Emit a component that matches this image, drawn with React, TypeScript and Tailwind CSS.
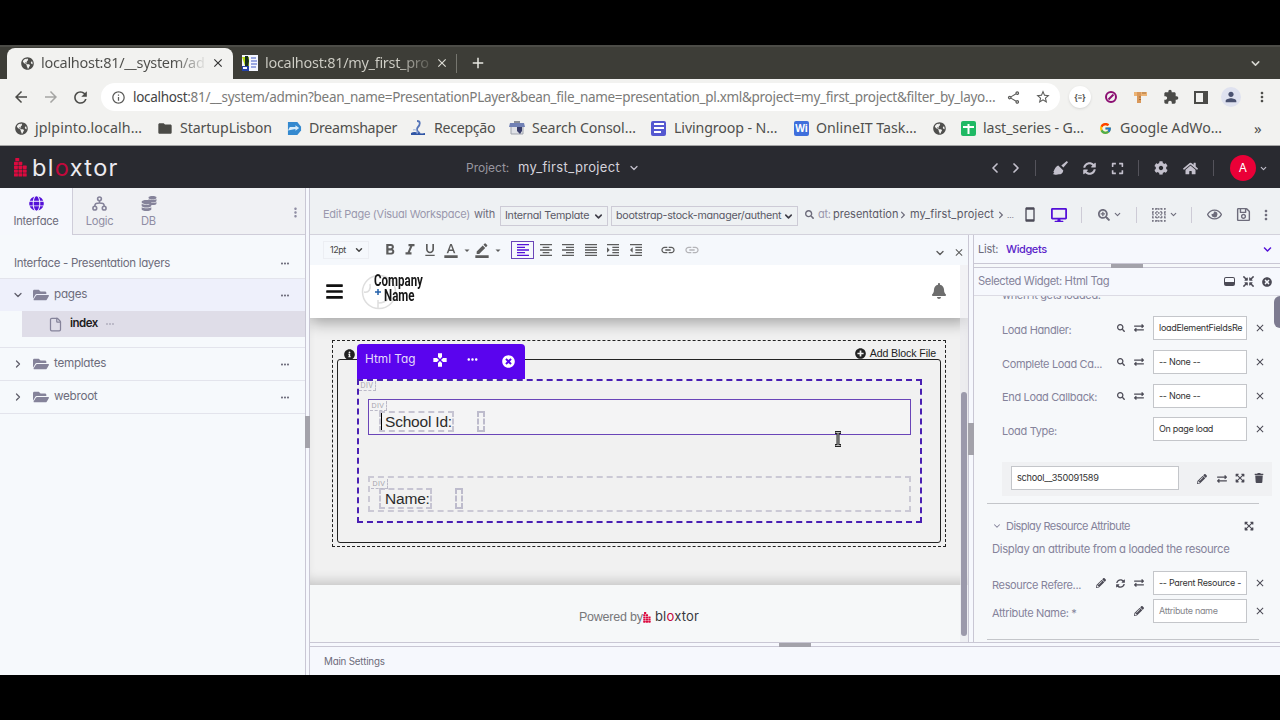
import type { ReactNode } from "react";
import { clsx } from "clsx";
import {
  FaBars,
  FaBell,
  FaChevronDown,
  FaChevronRight,
  FaCog,
  FaCompressArrowsAlt,
  FaDatabase,
  FaDesktop,
  FaExchangeAlt,
  FaExpand,
  FaExpandArrowsAlt,
  FaFolderOpen,
  FaGlobe,
  FaGlobeAmericas,
  FaHome,
  FaInfoCircle,
  FaPencilAlt,
  FaPlusCircle,
  FaRegEye,
  FaRegSave,
  FaSearch,
  FaSearchPlus,
  FaSyncAlt,
  FaTimesCircle,
  FaTrash,
} from "react-icons/fa";
import { FcGoogle } from "react-icons/fc";
import {
  MdAdd,
  MdArrowBack,
  MdArrowDropDown,
  MdArrowForward,
  MdBorderColor,
  MdClose,
  MdExtension,
  MdFolder,
  MdFormatAlignCenter,
  MdFormatAlignJustify,
  MdFormatAlignLeft,
  MdFormatAlignRight,
  MdFormatBold,
  MdFormatColorText,
  MdFormatIndentDecrease,
  MdFormatIndentIncrease,
  MdFormatItalic,
  MdFormatUnderlined,
  MdGamepad,
  MdInfoOutline,
  MdLink,
  MdMoreHoriz,
  MdMoreVert,
  MdOutlineShare,
  MdPerson,
  MdRefresh,
  MdStarBorder,
  MdStayCurrentPortrait,
} from "react-icons/md";
import { ChevronDown, ChevronLeft, ChevronRight, File } from "lucide-react";

type CellProps = {
  className?: string;
  children?: ReactNode;
};

// fixed-width slot that centers an icon
function Slot({ className, children }: CellProps) {
  return (
    <span className={clsx("flex shrink-0 items-center justify-center", className)}>
      {children}
    </span>
  );
}

function Label({ className, children }: CellProps) {
  return (
    <span className={clsx("shrink-0 whitespace-nowrap", className)}>{children}</span>
  );
}

function BrandMark({ className }: { className?: string }) {
  const dots = [
    [0.3, 0],
    [0, 1],
    [1, 1],
    [0, 2],
    [1, 2],
    [2, 2],
    [0, 3],
    [1, 3],
    [2, 3],
    [0, 4],
    [1, 4],
    [2, 4],
  ];
  return (
    <svg viewBox="0 0 13 19" className={className} fill="#dc0a3f">
      {dots.map(([x, y], i) => (
        <rect key={i} x={x * 4.4} y={y * 3.8} width="3.9" height="3.3" rx="0.6" />
      ))}
    </svg>
  );
}

function BrushIcon() {
  return (
    <svg viewBox="0 0 16 16" className="size-4" fill="#c3c0cc">
      <path d="M14.8 1 16 2.2 11.4 7.6 9.3 5.6z" />
      <path d="M6.300 5.600 11.300 10.400C11 13 9 14.300 7 14.300 4.500 15 2 14.500.8 14.200L2.300 12.400 1.300 12C2.600 10.500 2.600 7 6.300 5.600z" />
    </svg>
  );
}

function BrowserTabs() {
  return (
    <div className="flex h-[34px] shrink-0 items-end border-t-2 border-[#4c4c47] bg-[#3d3d37] text-[14.5px] text-[#4d4d4a]">
      <div className="ml-[7px] flex h-[31px] w-[226px] items-center rounded-t-lg bg-[#f2f2f0] pb-px pl-3">
        <Slot className="mr-[6px] w-4 text-[#4d4d4a]">
          <FaGlobeAmericas size={13} />
        </Slot>
        <span className="w-[165px] shrink-0 bg-linear-to-r from-[#4d4d4a] from-80% to-[#e8e8e6] bg-clip-text whitespace-nowrap text-transparent tracking-[-0.300px]">
          localhost:81/__system/ad
        </span>
        <Slot className="ml-[4px] w-4 text-[#333]">
          <MdClose size={14} />
        </Slot>
      </div>
      <div className="flex h-[31px] items-center pb-px pl-[9px] text-[#c9c8c0]">
        <svg viewBox="0 0 16 16" className="mr-[7px] size-4 shrink-0">
          <rect width="16" height="16" fill="#f4f6ff" />
          <path d="M0 2h7v9H3z" fill="#b6dc10" />
          <path d="M3 1h3l1 5-1 7H3z" fill="#17301e" />
          <path d="M9 3h5M9 6h6M9 9h6M9 12h5" stroke="#7c8dd8" strokeWidth="1.300" />
          <path d="M0 11h7v5H0z" fill="#2341a8" />
          <path d="M1 12h4v2H1z" fill="#f4f6ff" />
        </svg>
        <span className="w-[166px] shrink-0 bg-linear-to-r from-[#cfcec6] from-80% to-[#55554e] bg-clip-text whitespace-nowrap text-transparent tracking-[-0.300px]">
          localhost:81/my_first_pro
        </span>
        <Slot className="ml-[3px] w-4 text-[#dddcd5]">
          <MdClose size={14} />
        </Slot>
        <div className="ml-[6px] h-[19px] w-px bg-[#76766f]" />
        <Slot className="ml-[11px] w-5 text-[#e8e8e2]">
          <MdAdd size={18} />
        </Slot>
      </div>
      <Slot className="mr-[17px] ml-auto h-[31px] w-4 text-[#d5d5cf]">
        <ChevronDown size={13} strokeWidth={2.800} />
      </Slot>
    </div>
  );
}

function AddressBar() {
  return (
    <div className="flex h-[35px] shrink-0 items-center bg-[#f2f2f0] pt-px pl-[11px] text-[#4b4b48]">
      <Slot className="w-5">
        <MdArrowBack size={18} />
      </Slot>
      <Slot className="ml-[10px] w-5 text-[#a5a5a3]">
        <MdArrowForward size={18} />
      </Slot>
      <Slot className="ml-[9px] w-5">
        <MdRefresh size={19} />
      </Slot>
      <div className="ml-[11px] flex h-[28px] w-[959px] shrink-0 items-center rounded-full bg-white pl-[9px]">
        <Slot className="w-4 text-[#5b5b59]">
          <MdInfoOutline size={15} />
        </Slot>
        <Label className="ml-[7px] w-[864px] text-[13.500px] tracking-[-0.308px] text-[#7b7b79]">
          <span className="text-[#444]">localhost</span>
          :81/__system/admin?bean_name=PresentationPLayer&amp;bean_file_name=presentation_pl.xml&amp;project=my_first_project&amp;filter_by_layo…
        </Label>
        <Slot className="ml-2 w-4 text-[#5b5b59]">
          <MdOutlineShare size={15} />
        </Slot>
        <Slot className="ml-[14px] w-4 text-[#5b5b59]">
          <MdStarBorder size={16} />
        </Slot>
      </div>
      <Slot className="ml-[9px] size-[22px] rounded-full bg-white text-[8px] font-bold shadow">
        {"{≡}"}
      </Slot>
      <Slot className="ml-[12px] w-4">
        <svg viewBox="0 0 12 12" className="size-3" fill="none" stroke="#8c0f72" strokeWidth="2">
          <circle cx="6" cy="6" r="5" />
          <path d="M3.500 8.500 8.500 3.500" />
        </svg>
      </Slot>
      <Slot className="ml-[14px] w-4">
        <svg viewBox="0 0 14 14" className="size-[14px]">
          <path d="M0 2h13v4H0z" fill="#ecb374" />
          <path d="M3 2h4v11H3z" fill="#d9985a" />
          <path d="M5 7h2M9 2v2M11 2v2M5 9.500h2" stroke="#8a5424" strokeWidth="0.700" />
        </svg>
      </Slot>
      <Slot className="ml-[14px] w-4">
        <MdExtension size={16} />
      </Slot>
      <Slot className="ml-[14px] w-4">
        <span className="h-[13px] w-[14px] border-2 border-r-[5px] border-[#4b4b48]" />
      </Slot>
      <Slot className="ml-[12px] size-[20px] rounded-full bg-[#dfe2ef] text-[#4a5270]">
        <MdPerson size={16} />
      </Slot>
      <Slot className="ml-[13px] w-4">
        <MdMoreVert size={18} />
      </Slot>
    </div>
  );
}

function Bookmarks() {
  return (
    <div className="flex h-[32px] shrink-0 items-center border-b border-[#a5a5a5] bg-[#f2f2f0] pb-[3px] pl-[13px] text-[14.2px] text-[#4f4f4d]">
      <Slot className="w-4">
        <FaGlobeAmericas size={13} />
      </Slot>
      <Label className="ml-[6px] w-[122px] tracking-[0.100px]">jplpinto.localh…</Label>
      <Slot className="w-4 text-[#4a4a46]">
        <MdFolder size={17} />
      </Slot>
      <Label className="ml-[7px] w-[106px] tracking-[-0.100px]">StartupLisbon</Label>
      <Slot className="w-4">
        <svg viewBox="0 0 16 16" className="size-[15px]">
          <path d="M1 1h10l4 5v4l-4 5H1z" fill="#3489cf" />
          <path d="M3 6.500h6V4.500l4 3-4 3v-2L1 10z" fill="#d8ecfa" />
        </svg>
      </Slot>
      <Label className="ml-[7px] w-[101px] tracking-[-0.300px]">Dreamshaper</Label>
      <Slot className="w-4">
        <svg viewBox="0 0 16 16" className="size-4" fill="none">
          <path d="M7 1c4 0 3 4 1 6s-1 5 2 6" stroke="#5675b8" strokeWidth="1.800" />
          <path d="M1 13c5-3 8 2 14 0v2H1z" fill="#2f55a5" />
          <path d="M3 10c3-1 5 1 4 4" stroke="#9ab0dc" />
        </svg>
      </Slot>
      <Label className="ml-[8px] w-[75px] tracking-[-0.300px]">Recepção</Label>
      <Slot className="w-4">
        <svg viewBox="0 0 16 16" className="size-4">
          <path d="M2 5h12v9H2z" fill="#dfe1e6" stroke="#9fa3ad" />
          <path d="M1 3h14l1 4H0z" fill="#7181b5" />
          <path d="M5 1h6v2H5z" fill="#8b8f99" />
          <path d="M8 7h5v4l-2 3-3-3z" fill="#3a3f6b" />
        </svg>
      </Slot>
      <Label className="ml-[7px] w-[119px] tracking-[-0.100px]">Search Consol…</Label>
      <Slot className="h-[15px] w-[15px] flex-col gap-[2px] rounded-xs bg-[#5558d0]">
        <span className="h-[2px] w-[10px] bg-white" />
        <span className="h-[2px] w-[10px] bg-white" />
        <span className="mr-[3px] h-[2px] w-[7px] bg-white" />
      </Slot>
      <Label className="ml-[8px] w-[119px] tracking-[-0.100px]">Livingroop - N…</Label>
      <Slot className="ml-px h-[15px] w-[15px] rounded-xs bg-[#3f6fdc] text-[10px] font-bold text-white">
        Wi
      </Slot>
      <Label className="ml-[7px] w-[115px]">OnlineIT Task…</Label>
      <Slot className="w-4">
        <FaGlobeAmericas size={13} />
      </Slot>
      <Slot className="ml-[14px] size-[15px] rounded-xs bg-[#1fb964]">
        <svg viewBox="0 0 15 15" className="size-[15px]">
          <path d="M2 6h11M7.500 3v10" stroke="#fff" strokeWidth="2" />
        </svg>
      </Slot>
      <Label className="ml-[7px] w-[115px] tracking-[-0.100px]">last_series - G…</Label>
      <Slot className="-ml-px w-4">
        <FcGoogle size={13} />
      </Slot>
      <Label className="ml-[7px] w-[134px]">Google AdWo…</Label>
      <Label className="text-[15px] leading-4">»</Label>
    </div>
  );
}

function AppHeader() {
  return (
    <header className="flex h-[42px] shrink-0 items-center bg-[#292a30] pt-[2px] text-[#c3c0cc]">
      <BrandMark className="mb-px ml-[14px] h-[19px] w-[13px]" />
      <Label className="-mt-px ml-[5px] w-[434px] text-[23.500px] tracking-[1.350px] text-[#eceaf0]">
        bl<span className="text-[#c2083c]">o</span>xtor
      </Label>
      <Label className="w-[52px] text-[12px] text-[#98969f]">Project:</Label>
      <Label className="w-[108px] text-[13px] tracking-[0.350px] text-[#d5d3dc]">my_first_project</Label>
      <Slot className="w-4">
        <ChevronDown size={12} strokeWidth={2.500} />
      </Slot>
      <div className="mr-[11px] ml-auto flex items-center">
        <Slot className="w-4">
          <ChevronLeft size={18} strokeWidth={2.500} />
        </Slot>
        <Slot className="ml-[5px] w-4">
          <ChevronRight size={18} strokeWidth={2.500} />
        </Slot>
        <span className="ml-[11px] h-4 w-px bg-[#54535b]" />
        <Slot className="ml-[16px] w-4">
          <BrushIcon />
        </Slot>
        <Slot className="ml-[13px] w-4">
          <FaSyncAlt size={13} />
        </Slot>
        <Slot className="ml-[12px] w-4">
          <FaExpand size={13} />
        </Slot>
        <span className="ml-[13px] h-4 w-px bg-[#54535b]" />
        <Slot className="ml-[14px] w-4">
          <FaCog size={14} />
        </Slot>
        <Slot className="ml-[13px] w-4">
          <FaHome size={15} />
        </Slot>
        <span className="ml-[15px] h-4 w-px bg-[#54535b]" />
        <Slot className="ml-[16px] size-[26px] rounded-full bg-[#ea0037] text-[12px] text-white">
          A
        </Slot>
        <Slot className="ml-[2px] w-[11px]">
          <ChevronDown size={9} strokeWidth={3} />
        </Slot>
      </div>
    </header>
  );
}

function TreeRow({
  name,
  open,
  className,
}: {
  name: string;
  open?: boolean;
  className?: string;
}) {
  return (
    <div className={clsx("flex shrink-0 items-center border-t border-[#e3e4ec] pl-3", className)}>
      <Slot className="w-3 text-[#5f5e6a]">
        {open ? (
          <ChevronDown size={12} strokeWidth={2.500} />
        ) : (
          <ChevronRight size={12} strokeWidth={2.500} />
        )}
      </Slot>
      <Slot className="ml-[9px] w-4 text-[#85839a]">
        <FaFolderOpen size={16} />
      </Slot>
      <Label className="ml-[5px] pb-px text-[11.700px] tracking-[-0.280px] text-[#6d6c7b]">{name}</Label>
      <Slot className="mr-[14px] ml-auto w-3 text-[#6d6c7b]">
        <MdMoreHoriz size={13} />
      </Slot>
    </div>
  );
}

function Sidebar() {
  return (
    <aside className="flex w-[305px] shrink-0 flex-col bg-[#f6f9fc]">
      <div className="flex h-[47px] shrink-0 bg-[#f0f1f4] text-[11.200px] tracking-[-0.280px] text-[#8f8da3]">
        <div className="flex w-[73px] flex-col items-center border-r border-[#cfcdd9] bg-[#f6f8fd] pt-2 text-[#6d6c7b]">
          <FaGlobe size={15} className="text-[#5410d8]" />
          <span className="mt-[2px]">Interface</span>
        </div>
        <div className="flex flex-1 border-b border-[#cfcdd9] pt-2">
          <div className="flex w-[53px] flex-col items-center">
            <svg viewBox="0 0 16 16" className="size-[15px]" fill="none" stroke="#85839a" strokeWidth="1.700">
              <circle cx="8" cy="3" r="2" />
              <circle cx="3" cy="13" r="2" />
              <circle cx="13" cy="13" r="2" />
              <path d="M8 5v3M3 11c0-3 1-3.500 5-3.500S13 8 13 11" />
            </svg>
            <span className="mt-[2px]">Logic</span>
          </div>
          <div className="flex w-[45px] flex-col items-center">
            <span className="flex h-[15px] items-start text-[#85839a]">
              <FaDatabase size={11} className="mt-1" />
              <FaDatabase size={9} className="-ml-1" />
            </span>
            <span className="mt-[2px]">DB</span>
          </div>
          <Slot className="mt-1 mr-[2px] ml-auto h-6 w-4">
            <MdMoreVert size={15} />
          </Slot>
        </div>
      </div>
      <div className="flex h-[43px] shrink-0 items-center pt-[14px] pl-[14px] text-[11.500px] tracking-[-0.320px] text-[#6d6c7b]">
        <Label>Interface - Presentation layers</Label>
        <Slot className="mr-[14px] ml-auto w-3">
          <MdMoreHoriz size={13} />
        </Slot>
      </div>
      <TreeRow name="pages" open className="h-[33px] bg-[#eef0fb]" />
      <div className="ml-[22px] flex h-[26px] shrink-0 items-center bg-[#dfdde8] pl-[26px]">
        <File size={15} className="text-[#85839a]" />
        <Label className="ml-[7px] text-[11.500px] font-semibold tracking-[-0.500px] text-[#1c1b20]">index</Label>
        <MdMoreHoriz size={12} className="ml-[6px] text-[#b5b3c2]" />
      </div>
      <TreeRow name="templates" className="mt-[10px] h-[33px]" />
      <TreeRow name="webroot" className="h-[33px]" />
      <div className="border-t border-[#e3e4ec]" />
    </aside>
  );
}

function SelectBox({ className, children }: CellProps) {
  return (
    <div
      className={clsx(
        "flex h-[20px] shrink-0 items-center justify-between border border-[#cdcbd6] pt-px pr-[3px] pl-[4px] text-[10.700px] whitespace-nowrap text-[#5a5966]",
        className,
      )}
    >
      <span>{children}</span>
      <ChevronDown size={11} strokeWidth={3.500} className="shrink-0 text-[#3f3e48]" />
    </div>
  );
}

function PageToolbar() {
  return (
    <div className="flex h-[47px] shrink-0 items-center border-b border-[#d3d2dc] bg-[#eef1f3] pt-[7px] pl-[13px] text-[11px] text-[#6d6c7b]">
      <Label className="w-[151px] tracking-[-0.280px] text-[#9a98ad]">Edit Page (Visual Workspace)</Label>
      <Label className="w-[26px] tracking-[-0.200px]">with</Label>
      <SelectBox className="mt-[2px] w-[108px] tracking-[-0.250px]">Internal Template</SelectBox>
      <SelectBox className="mt-[2px] ml-[3px] w-[187px] tracking-[-0.260px]">
        bootstrap-stock-manager/authent
      </SelectBox>
      <Slot className="ml-[6px] w-[10px]">
        <FaSearch size={9} />
      </Slot>
      <Label className="ml-[4px] w-[15px] tracking-[-0.300px] text-[#9a98ad]">at:</Label>
      <Label className="w-[66px] text-[#5a5966]">presentation</Label>
      <FaChevronRight size={8} className="w-[8px] shrink-0" />
      <Label className="ml-[3px] w-[87px] tracking-[0.150px] text-[#5a5966]">my_first_project</Label>
      <FaChevronRight size={8} className="w-[8px] shrink-0" />
      <Label className="ml-[2px] w-[6px] text-[8px]">…</Label>
      <Slot className="ml-[9px] w-4 text-[#4c4b58]">
        <MdStayCurrentPortrait size={17} />
      </Slot>
      <Slot className="ml-[13px] w-4 text-[#5410d8]">
        <FaDesktop size={16} />
      </Slot>
      <span className="ml-[14px] h-4 w-px bg-[#cdcbd6]" />
      <Slot className="ml-[14px] w-4">
        <FaSearchPlus size={12} />
      </Slot>
      <ChevronDown size={9} strokeWidth={3} className="ml-px" />
      <span className="ml-[14px] h-4 w-px bg-[#cdcbd6]" />
      <Slot className="ml-[14px] w-4">
        <svg viewBox="0 0 14 14" className="size-[14px]" stroke="#6d6c7b" strokeWidth="1.300" strokeDasharray="1.500 1.500">
          <path d="M0 1h14M0 5h14M0 9h14M0 13h14M1 0v14M5 0v14M9 0v14M13 0v14" />
        </svg>
      </Slot>
      <ChevronDown size={9} strokeWidth={3} className="ml-[2px]" />
      <span className="ml-[13px] h-4 w-px bg-[#cdcbd6]" />
      <Slot className="ml-[14px] w-4">
        <FaRegEye size={15} />
      </Slot>
      <Slot className="ml-[13px] w-4">
        <FaRegSave size={15} />
      </Slot>
      <Slot className="ml-[7px] w-4">
        <MdMoreVert size={16} />
      </Slot>
    </div>
  );
}

function EditorToolbar() {
  return (
    <div className="flex h-[30px] shrink-0 items-center bg-[#f5f8fc] pl-[13px] text-[#5c5c5c]">
      <div className="flex h-[18px] w-[46px] shrink-0 items-center justify-between border border-[#eceef3] pr-[4px] pl-[6px] text-[9px] tracking-[-0.500px] text-[#444]">
        12pt
        <ChevronDown size={10} strokeWidth={3.500} />
      </div>
      <Slot className="ml-[11px] w-5">
        <MdFormatBold size={18} />
      </Slot>
      <Slot className="w-5">
        <MdFormatItalic size={18} />
      </Slot>
      <Slot className="w-5">
        <MdFormatUnderlined size={16} />
      </Slot>
      <Slot className="ml-px w-5">
        <MdFormatColorText size={16} />
      </Slot>
      <Slot className="w-3">
        <MdArrowDropDown size={15} />
      </Slot>
      <Slot className="-ml-px w-5">
        <MdBorderColor size={16} />
      </Slot>
      <Slot className="w-3">
        <MdArrowDropDown size={15} />
      </Slot>
      <Slot className="ml-[7px] h-[18px] w-[23px] border border-[#6a45b8] text-[#5410d8]">
        <MdFormatAlignLeft size={16} />
      </Slot>
      <Slot className="w-[23px]">
        <MdFormatAlignCenter size={16} />
      </Slot>
      <Slot className="w-[22px]">
        <MdFormatAlignRight size={16} />
      </Slot>
      <Slot className="w-[23px]">
        <MdFormatAlignJustify size={16} />
      </Slot>
      <Slot className="w-[22px]">
        <MdFormatIndentIncrease size={16} />
      </Slot>
      <Slot className="w-[23px]">
        <MdFormatIndentDecrease size={16} />
      </Slot>
      <Slot className="ml-[11px] w-5">
        <MdLink size={16} />
      </Slot>
      <Slot className="ml-[4px] w-5 text-[#b4b4b8]">
        <MdLink size={16} />
      </Slot>
      <Slot className="mt-[5px] mr-[5px] ml-auto w-4">
        <ChevronDown size={12} strokeWidth={2.800} />
      </Slot>
      <Slot className="mt-[4px] mr-[3px] w-3">
        <MdClose size={15} />
      </Slot>
    </div>
  );
}

function SiteHeader() {
  return (
    <div className="relative flex h-[53px] shrink-0 items-center bg-white shadow-[0_5px_14px_rgba(0,0,0,0.320)]">
      <FaBars size={19} className="ml-[15px] text-[#111]" />
      <div className="relative ml-[17px] flex size-[36px] items-center">
        <svg viewBox="0 0 36 36" className="size-[36px]" fill="none" stroke="#dedede" strokeWidth="1.500">
          <circle cx="18" cy="18" r="16.500" />
          <path d="M3 18c5 1 7-3 6-8M17 26v9M17 29c4 0 8-1 11-5" />
          <path d="M17 15v6M14 18h6" stroke="#2461ab" />
        </svg>
        <div className="absolute -top-px left-[13px] origin-left scale-x-[0.720] font-[Roboto] text-[16px] leading-[15px] font-bold whitespace-nowrap text-[#161616]">
          Company
          <br />
          <span className="ml-[14px]">Name</span>
        </div>
      </div>
      <FaBell size={16} className="mr-[21px] mb-[2px] ml-auto text-[#6d6d6d]" />
    </div>
  );
}

function DivTag({ className }: { className?: string }) {
  return (
    <span
      className={clsx(
        "absolute flex h-[10px] w-[17px] items-center justify-center border-r border-b border-dashed border-[#bbb9c8] text-[7px] leading-none tracking-[0.400px] text-[#a5a3ad]",
        className,
      )}
    >
      DIV
    </span>
  );
}

function FieldLine({ label, active }: { label: string; active?: boolean }) {
  return (
    <div
      className={clsx(
        "relative flex h-[36px] font-['Liberation_Sans']",
        active
          ? "border border-[#6a45b8] bg-[#f4f4f5] pt-[11px] pl-[10px]"
          : "border-2 border-dashed border-[#cbc9d5] pt-[10px] pl-[9px]",
      )}
    >
      <DivTag className="top-[1px] left-[1px]" />
      {active && <span className="absolute top-[13px] left-[12px] h-[17px] w-px bg-black" />}
      <span className="flex h-[21px] items-center border-2 border-dashed border-[#c6c4d2] pl-[4px] text-[15.500px] tracking-[-0.200px] whitespace-nowrap text-[#2b2b2b]">
        {label}
      </span>
      <span className="ml-[23px] h-[21px] w-[8px] border-2 border-dashed border-[#bdbbcc]" />
    </div>
  );
}

function Canvas() {
  return (
    <div className="h-[267px] shrink-0 pt-[22px] pl-[22px] shadow-[inset_0_-10px_12px_-6px_rgba(0,0,0,0.180)]">
      <div className="relative h-[207px] w-[614px] border border-dashed border-[#222] px-1 pt-[18px] pb-1">
        <FaInfoCircle size={11} className="absolute top-[8px] left-[11px] text-[#222]" />
        <div className="absolute top-[5px] right-[9px] flex items-center gap-[4px] font-['Liberation_Sans'] text-[10.600px] tracking-[-0.100px] text-[#222]">
          <FaPlusCircle size={11} />
          Add Block File
        </div>
        <div className="relative h-[184px] rounded-[3px] border border-[#222] pt-[19px] pr-[18px] pl-[19px]">
          <div className="absolute -top-[16px] left-[19px] flex h-[35px] w-[168px] items-start rounded-t-[4px] bg-[#5a04ee] text-[11.800px] text-[#e6dcfb]">
            <Label className="mt-[7px] ml-[8px] w-[67px]">Html Tag</Label>
            <Slot className="mt-[8px] w-4 text-white">
              <MdGamepad size={16} />
            </Slot>
            <Slot className="mt-[8px] ml-[16px] w-4 text-white">
              <MdMoreHoriz size={15} />
            </Slot>
            <Slot className="mt-[11px] ml-[20px] w-4 text-white">
              <FaTimesCircle size={13} />
            </Slot>
          </div>
          <div className="relative flex h-[144px] flex-col gap-[41px] border-2 border-dashed border-[#4a1fb3] px-[9px] pt-[18px]">
            <DivTag className="top-0 left-0" />
            <FieldLine label="School Id:" active />
            <FieldLine label="Name:" />
          </div>
        </div>
      </div>
      {/* text cursor */}
      <svg viewBox="0 0 8 16" className="relative -top-[116px] left-[502px] h-[16px] w-[8px]" fill="none">
        <path d="M1 1.500h6M1 14.500h6M4 1.500v13" stroke="#222" strokeWidth="3" />
        <path d="M1.500 1.500h5M1.500 14.500h5M4 1.500v13" stroke="#ddd" strokeWidth="0.800" />
      </svg>
    </div>
  );
}

function Preview() {
  return (
    <section className="flex w-[658px] shrink-0 flex-col overflow-hidden bg-[#f1f1f1]">
      <EditorToolbar />
      <div className="flex min-h-0 flex-1">
        <div className="flex w-[658px] shrink-0 flex-col overflow-hidden">
          <SiteHeader />
          <Canvas />
          <div className="flex flex-1 items-center justify-center bg-[#f6f8f9] pt-[7px] font-['Liberation_Sans'] text-[12.500px] text-[#77777a]">
            <Label className="tracking-[-0.200px]">Powered by</Label>
            <BrandMark className="h-[11px] w-[8px]" />
            <Label className="ml-[4px] font-[Inter] text-[13px] tracking-[0.200px] text-[#38383c]">
              bl<span className="text-[#c2083c]">o</span>xtor
            </Label>
          </div>
        </div>
        <div className="z-10 -ml-[8px] w-[8px] shrink-0 bg-[#e9eaee]/60 pt-[127px] pl-px">
          <div className="h-[244px] w-[6px] rounded-full bg-[#9b99ab]" />
        </div>
      </div>
    </section>
  );
}

function VerticalGrip({ className }: { className?: string }) {
  return (
    <div className={clsx("shrink-0 border-x border-[#c9c7d4] bg-[#f6f8fd]", className)}>
      <div className="-mx-px h-[32px] bg-[#a3a2aa]" />
    </div>
  );
}

type PropertyRowProps = {
  label: string;
  value: string;
  icons: ReactNode;
  muted?: boolean;
  className?: string;
};

function PropertyRow({ label, value, icons, muted, className }: PropertyRowProps) {
  return (
    <div className={clsx("flex shrink-0 items-center text-[#4b4a55]", className)}>
      <Label className="mt-[4px] text-[11px] tracking-[-0.350px] text-[#85839a]">{label}</Label>
      <div className="mr-[7px] ml-auto flex items-center gap-[4px]">{icons}</div>
      <div
        className={clsx(
          "flex h-[24px] w-[94px] shrink-0 items-center overflow-hidden border border-[#c4c6ca] bg-white pr-[4px] pl-[5px] text-[9px] tracking-[-0.300px] whitespace-nowrap",
          muted ? "text-[#85858a]" : "text-[#333]",
        )}
      >
        {value}
      </div>
      <Slot className="ml-[6px] w-[13px]">
        <MdClose size={12} />
      </Slot>
    </div>
  );
}

const searchIcon = (
  <Slot className="w-[14px]">
    <FaSearch size={8} />
  </Slot>
);
const swapIcon = (
  <Slot className="w-[14px]">
    <FaExchangeAlt size={10} />
  </Slot>
);
const penIcon = (
  <Slot className="w-[14px]">
    <FaPencilAlt size={10} />
  </Slot>
);

function PropertiesPanel() {
  return (
    <aside className="flex w-[306px] flex-col overflow-hidden bg-[#f6f8fa] text-[#6d6c7b]">
      <div className="flex h-[29px] shrink-0 items-center border-b border-[#c9c7d4] bg-[#f6f8fd] pt-px pl-[4px] text-[11px] tracking-[-0.250px]">
        <Label className="w-[28px]">List:</Label>
        <Label className="font-medium tracking-[-0.400px] text-[#5a1fc9]">Widgets</Label>
        <FaChevronDown size={9} className="mr-[8px] ml-auto text-[#5410d8]" />
      </div>
      <div className="flex h-[4px] shrink-0 justify-center border-b border-[#c9c7d4]">
        <div className="h-[4px] w-[32px] bg-[#a3a2aa]" />
      </div>
      <div className="flex h-[28px] shrink-0 items-center border-b border-[#dcdbe4] bg-[#f6f8fd] pl-[4px] text-[11.200px] tracking-[-0.400px] text-[#85839a]">
        <Label>Selected Widget: Html Tag</Label>
        <span className="mr-[8px] ml-auto h-[9px] w-[11px] rounded-xs border border-b-4 border-[#4b4a55]" />
        <FaCompressArrowsAlt size={11} className="mr-[8px] text-[#4b4a55]" />
        <FaTimesCircle size={10} className="mr-[8px] text-[#4b4a55]" />
      </div>
      <div className="flex min-h-0 flex-1">
        <div className="flex w-[300px] shrink-0 flex-col">
          <div className="h-[13px] shrink-0 overflow-hidden pl-[28px] text-[11px] leading-[12px] tracking-[-0.340px] text-[#85839a]">
            <div className="-mt-[7px]">when it gets loaded.</div>
          </div>
          <PropertyRow className="mt-[2px] h-[34px] pr-[8px] pl-[28px]" label="Load Handler:" value="loadElementFieldsRe" icons={<>{searchIcon}{swapIcon}</>} />
          <PropertyRow className="h-[34px] pr-[8px] pl-[28px]" label="Complete Load Ca..." value="-- None --" icons={<>{searchIcon}{swapIcon}</>} />
          <PropertyRow className="h-[33px] pr-[8px] pl-[28px]" label="End Load Callback:" value="-- None --" icons={<>{searchIcon}{swapIcon}</>} />
          <PropertyRow className="h-[34px] pr-[8px] pl-[28px]" label="Load Type:" value="On page load" icons={null} />
          <div className="mt-[16px] ml-[28px] flex h-[34px] w-[270px] shrink-0 items-center bg-[#f0f1f3] pl-[9px] text-[#4b4a55]">
            <div className="mb-[2px] flex h-[24px] w-[168px] shrink-0 items-center border border-[#c4c6ca] bg-white pl-[5px] text-[9.200px] tracking-[-0.260px] text-[#333]">
              school__350091589
            </div>
            <Slot className="ml-[16px] w-[14px]">
              <FaPencilAlt size={10} />
            </Slot>
            <Slot className="ml-[6px] w-[13px]">
              <FaExchangeAlt size={10} />
            </Slot>
            <Slot className="mb-[3px] ml-[5px] w-[14px]">
              <FaExpandArrowsAlt size={10} />
            </Slot>
            <Slot className="mb-[2px] ml-[5px] w-[13px]">
              <FaTrash size={10} />
            </Slot>
          </div>
          <div className="mt-[7px] ml-[13px] w-[272px] shrink-0 border-t border-[#c4c6ca]" />
          <div className="mt-[13px] ml-[18px] flex h-[18px] w-[262px] shrink-0 items-center text-[11px] tracking-[-0.550px] text-[#85839a]">
            <ChevronDown size={10} strokeWidth={2.500} />
            <Label className="ml-[4px]">Display Resource Attribute</Label>
            <FaExpandArrowsAlt size={10} className="ml-auto text-[#4b4a55]" />
          </div>
          <Label className="mt-[4px] h-[20px] pl-[18px] text-[11.300px] leading-[20px] tracking-[-0.340px] text-[#85839a]">
            Display an attribute from a loaded the resource
          </Label>
          <PropertyRow className="mt-[10px] h-[28px] pr-[8px] pl-[18px]" label="Resource Refere..." value="-- Parent Resource -" icons={<>{penIcon}<Slot className="w-[16px]"><FaSyncAlt size={9} /></Slot>{swapIcon}</>} />
          <PropertyRow className="h-[28px] pr-[8px] pl-[18px]" label="Attribute Name: *" value="Attribute name" icons={penIcon} muted />
          <div className="mt-[14px] ml-[13px] w-[272px] shrink-0 border-t border-[#c4c6ca]" />
        </div>
        <div className="h-[32px] w-[6px] rounded-l-full bg-[#7d7b90]" />
      </div>
    </aside>
  );
}

export default function App() {
  return (
    <div className="flex h-[720px] w-[1280px] flex-col overflow-hidden bg-black py-[45px]">
      <div className="flex shrink-0 flex-col font-['Noto_Sans',sans-serif]">
        <BrowserTabs />
        <AddressBar />
        <Bookmarks />
      </div>
      <div className="flex min-h-0 flex-1 flex-col font-[Inter,sans-serif] [font-feature-settings:'cv11']">
        <AppHeader />
        <div className="flex min-h-0 flex-1">
          <Sidebar />
          <VerticalGrip className="w-[5px] pt-[228px]" />
          <main className="flex min-w-0 flex-1 flex-col">
            <PageToolbar />
            <div className="flex h-[407px] shrink-0">
              <Preview />
              <VerticalGrip className="w-[6px] pt-[188px]" />
              <PropertiesPanel />
            </div>
            <div className="flex h-[5px] shrink-0 justify-center border-y border-[#c9c7d4] bg-[#f6f8fd]">
              <div className="h-[4px] w-[32px] bg-[#a3a2aa]" />
            </div>
            <div className="flex flex-1 items-center bg-[#f6f8fd] pt-[3px] pl-[14px] text-[9.800px] tracking-[-0.200px] text-[#6d6c7b]">
              Main Settings
            </div>
          </main>
        </div>
      </div>
    </div>
  );
}
